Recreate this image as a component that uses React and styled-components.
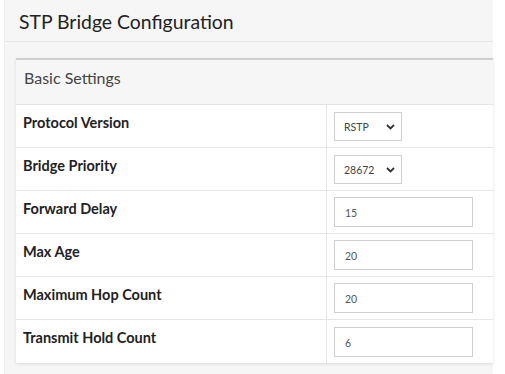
import React from 'react';
import styled, { createGlobalStyle } from 'styled-components';

const GlobalStyle = createGlobalStyle`
  body {
    margin: 0;
    background: #ffffff;
    font-family: Lato, "Open Sans", sans-serif;
  }
`;

const Page = styled.div`
  width: 505px;
  height: 374px;
  overflow: hidden;
  background: #ffffff;
`;

const Panel = styled.div`
  margin-left: 4px;
  width: 489px;
  height: 374px;
  background: #f6f6f6;
  border-left: 1px solid #ececec;
  box-sizing: border-box;
`;

const PanelHeader = styled.div`
  height: 42px;
  display: flex;
  align-items: center;
  padding-left: 14px;
  padding-top: 2px;
  box-sizing: border-box;
  border-bottom: 1px solid #e6e6e6;
`;

const Title = styled.h1`
  margin: 0;
  font-size: 19.4px;
  font-weight: 400;
  color: #222;
`;

const Section = styled.div`
  margin: 16px 0 0 11px;
  border-top: 2px solid #cfcfcf;
  box-shadow: 0 1px 3px rgba(0, 0, 0, 0.12);
`;

const SectionHeader = styled.div`
  height: 45px;
  padding: 10px 0 0 8px;
  box-sizing: border-box;
  font-size: 16px;
  line-height: 16px;
  color: #444;
  border-bottom: 1px solid #e4e4e4;
`;

const Table = styled.div`
  background: #ffffff;
`;

const Row = styled.div`
  display: grid;
  grid-template-columns: 311px 1fr;
  height: 43px;
  border-bottom: 1px solid #e6e6e6;
  box-sizing: border-box;
  &:last-child {
    border-bottom: none;
  }
`;

const Label = styled.div`
  padding: 9px 0 0 7px;
  font-size: 14.5px;
  font-weight: 700;
  color: #222;
  border-right: 1px solid #e6e6e6;
`;

const Cell = styled.div`
  display: flex;
  align-items: center;
  padding-left: 7px;
`;

const Select = styled.div`
  width: ${({ w }) => w}px;
  height: 29px;
  box-sizing: border-box;
  border: 1px solid #cfcfcf;
  display: flex;
  align-items: center;
  justify-content: space-between;
  padding: 2px 6px 0 9px;
  font-size: 10.5px;
  color: #444;
`;

const Input = styled.div`
  width: 139px;
  height: 30px;
  box-sizing: border-box;
  border: 1px solid #cfcfcf;
  display: flex;
  align-items: center;
  padding: 2px 0 0 10px;
  font-size: 10.5px;
  color: #555;
`;

const Chevron = () => (
  <svg width="9" height="6" viewBox="0 0 9 6">
    <path d="M1 1l3.5 3.5L8 1" fill="none" stroke="#333" strokeWidth="1.8" />
  </svg>
);

const rows = [
  { label: 'Protocol Version', kind: 'select', value: 'RSTP', w: 68 },
  { label: 'Bridge Priority', kind: 'select', value: '28672', w: 68 },
  { label: 'Forward Delay', kind: 'input', value: '15' },
  { label: 'Max Age', kind: 'input', value: '20' },
  { label: 'Maximum Hop Count', kind: 'input', value: '20' },
  { label: 'Transmit Hold Count', kind: 'input', value: '6' },
];

export default function App() {
  return (
    <Page>
      <GlobalStyle />
      <Panel>
        <PanelHeader>
          <Title>STP Bridge Configuration</Title>
        </PanelHeader>
        <Section>
          <SectionHeader>Basic Settings</SectionHeader>
          <Table>
            {rows.map((r) => (
              <Row key={r.label}>
                <Label>{r.label}</Label>
                <Cell>
                  {r.kind === 'select' ? (
                    <Select w={r.w}>
                      <span>{r.value}</span>
                      <Chevron />
                    </Select>
                  ) : (
                    <Input>{r.value}</Input>
                  )}
                </Cell>
              </Row>
            ))}
          </Table>
        </Section>
      </Panel>
    </Page>
  );
}
